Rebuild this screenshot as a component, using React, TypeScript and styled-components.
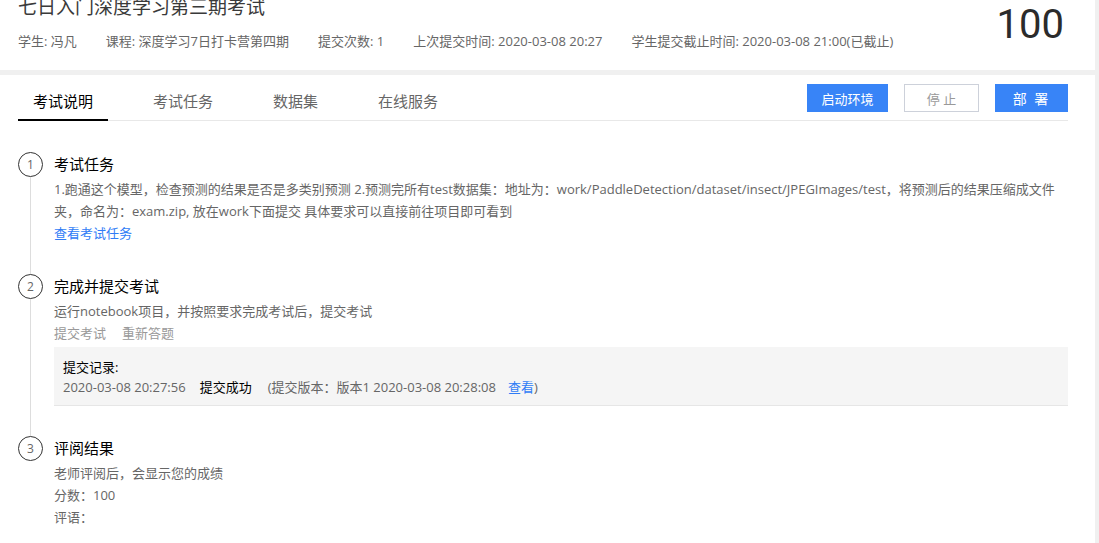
import React from "react";
import styled, { createGlobalStyle } from "styled-components";

const GlobalStyle = createGlobalStyle`
  html, body {
    margin: 0;
    padding: 0;
    background: #f0f0f0;
  }
  body {
    font-family: "Open Sans", "Noto Sans CJK SC", sans-serif;
    color: #333;
  }
  * { box-sizing: border-box; }
`;

const Page = styled.div`
  width: 1095px;
  display: flex;
  flex-direction: column;
  gap: 5px;
  height: 543px;
  overflow: hidden;
`;

const Header = styled.header`
  background: #fff;
  height: 70px;
  padding: 0 31px 0 18px;
  display: flex;
  justify-content: space-between;
  align-items: flex-start;
`;

const HeaderInfo = styled.div`
  display: flex;
  flex-direction: column;
`;

const Title = styled.h1`
  margin: -3px 0 0;
  font-size: 19px;
  line-height: 20px;
  font-weight: 400;
  color: #3a3a3a;
`;

const MetaRow = styled.div`
  margin-top: 14px;
  display: flex;
  gap: 29px;
  font-size: 13px;
  line-height: 20px;
  color: #666;
`;

const Score = styled.div`
  margin-top: 5px;
  font-family: Roboto, "Open Sans", sans-serif;
  font-size: 40px;
  line-height: 40px;
  color: #2b2b2b;
`;

const Panel = styled.main`
  flex: 1;
  background: #fff;
  padding: 0 27px 0 18px;
`;

const TabBar = styled.div`
  display: flex;
  height: 46px;
  border-bottom: 1px solid #e8e8e8;
`;

const Tab = styled.div<{ $active?: boolean }>`
  display: flex;
  align-items: center;
  padding: 6px 15px 0;
  margin-right: 30px;
  font-size: 15px;
  color: ${(p) => (p.$active ? "#000" : "#666")};
  border-bottom: 2px solid ${(p) => (p.$active ? "#000" : "transparent")};
  margin-bottom: -1px;
  cursor: pointer;
`;

const Actions = styled.div`
  margin-left: auto;
  display: flex;
  align-items: center;
  gap: 16px;
  padding-top: 1px;
`;

const Button = styled.button<{ $variant?: "primary" | "ghost"; $w: number; $spaced?: boolean }>`
  width: ${(p) => p.$w}px;
  height: 28px;
  padding: 0;
  font-family: inherit;
  font-size: ${(p) => (p.$spaced ? 14 : 13)}px;
  letter-spacing: ${(p) => (p.$spaced ? "2px" : "0")};
  border: 1px solid ${(p) => (p.$variant === "ghost" ? "#cdd1da" : "#3884f7")};
  background: ${(p) => (p.$variant === "ghost" ? "#fff" : "#3884f7")};
  color: ${(p) => (p.$variant === "ghost" ? "#999" : "#fff")};
  cursor: pointer;
`;

const Steps = styled.div`
  padding-top: 31px;
  display: flex;
  flex-direction: column;
`;

const StepRow = styled.section`
  display: flex;
`;

const Marker = styled.div`
  width: 25px;
  flex: none;
  display: flex;
  flex-direction: column;
  align-items: center;
`;

const Circle = styled.div`
  width: 25px;
  height: 25px;
  border: 1px solid #333;
  border-radius: 50%;
  display: flex;
  align-items: center;
  justify-content: center;
  font-size: 12px;
  color: #666;
  flex: none;
`;

const Line = styled.div`
  flex: 1;
  width: 1px;
  background: #ddd;
`;

const StepBody = styled.div<{ $last?: boolean }>`
  flex: 1;
  margin-left: 11px;
  padding-bottom: ${(p) => (p.$last ? 0 : 30)}px;
`;

const StepTitle = styled.h3`
  margin: 0 0 1px;
  font-size: 15px;
  line-height: 25px;
  font-weight: 400;
  color: #000;
`;

const Text = styled.p`
  margin: 0;
  font-size: 13px;
  line-height: 22px;
  color: #666;
  max-width: 1008px;
`;

const LinkText = styled.a`
  display: block;
  font-size: 13px;
  line-height: 22px;
  color: #2f7cf6;
  text-decoration: none;
`;

const MutedLinks = styled.div`
  display: flex;
  gap: 16px;
  font-size: 13px;
  line-height: 22px;
  color: #999;
`;

const RecordBox = styled.div`
  margin-top: 3px;
  padding: 10px 9px 8px;
  background: #f5f5f5;
  border-bottom: 1px solid #e6e6e6;
  font-size: 13px;
  line-height: 20px;
`;

const RecordHead = styled.div`
  color: #000;
`;

const RecordLine = styled.div`
  display: flex;
  color: #666;
`;

const Status = styled.span`
  color: #000;
  margin: 0 16px 0 14px;
`;

const InlineLink = styled.a`
  color: #2f7cf6;
  margin-left: 12px;
  text-decoration: none;
`;

type StepProps = {
  n: number;
  title: string;
  last?: boolean;
  children: React.ReactNode;
};

const Step = ({ n, title, last, children }: StepProps) => (
  <StepRow>
    <Marker>
      <Circle>{n}</Circle>
      {!last && <Line />}
    </Marker>
    <StepBody $last={last}>
      <StepTitle>{title}</StepTitle>
      {children}
    </StepBody>
  </StepRow>
);

export default function App() {
  return (
    <>
      <GlobalStyle />
      <Page>
        <Header>
          <HeaderInfo>
            <Title>七日入门深度学习第三期考试</Title>
            <MetaRow>
              <span>学生: 冯凡</span>
              <span>课程: 深度学习7日打卡营第四期</span>
              <span>提交次数: 1</span>
              <span>上次提交时间: 2020-03-08 20:27</span>
              <span>学生提交截止时间: 2020-03-08 21:00(已截止)</span>
            </MetaRow>
          </HeaderInfo>
          <Score>100</Score>
        </Header>
        <Panel>
          <TabBar>
            <Tab $active>考试说明</Tab>
            <Tab>考试任务</Tab>
            <Tab>数据集</Tab>
            <Tab>在线服务</Tab>
            <Actions>
              <Button $w={81}>启动环境</Button>
              <Button $w={75} $variant="ghost">停 止</Button>
              <Button $w={73} $spaced>部 署</Button>
            </Actions>
          </TabBar>
          <Steps>
            <Step n={1} title="考试任务">
              <Text>
                1.跑通这个模型，检查预测的结果是否是多类别预测 2.预测完所有test数据集：地址为：work/PaddleDetection/dataset/insect/JPEGImages/test，将预测后的结果压缩成文件夹，命名为：exam.zip, 放在work下面提交 具体要求可以直接前往项目即可看到
              </Text>
              <LinkText href="#">查看考试任务</LinkText>
            </Step>
            <Step n={2} title="完成并提交考试">
              <Text>运行notebook项目，并按照要求完成考试后，提交考试</Text>
              <MutedLinks>
                <span>提交考试</span>
                <span>重新答题</span>
              </MutedLinks>
              <RecordBox>
                <RecordHead>提交记录:</RecordHead>
                <RecordLine>
                  <span>2020-03-08 20:27:56</span>
                  <Status>提交成功</Status>
                  <span>
                    (提交版本：版本1 2020-03-08 20:28:08
                    <InlineLink href="#">查看</InlineLink>)
                  </span>
                </RecordLine>
              </RecordBox>
            </Step>
            <Step n={3} title="评阅结果" last>
              <Text>老师评阅后，会显示您的成绩</Text>
              <Text>分数：100</Text>
              <Text>评语：</Text>
            </Step>
          </Steps>
        </Panel>
      </Page>
    </>
  );
}
